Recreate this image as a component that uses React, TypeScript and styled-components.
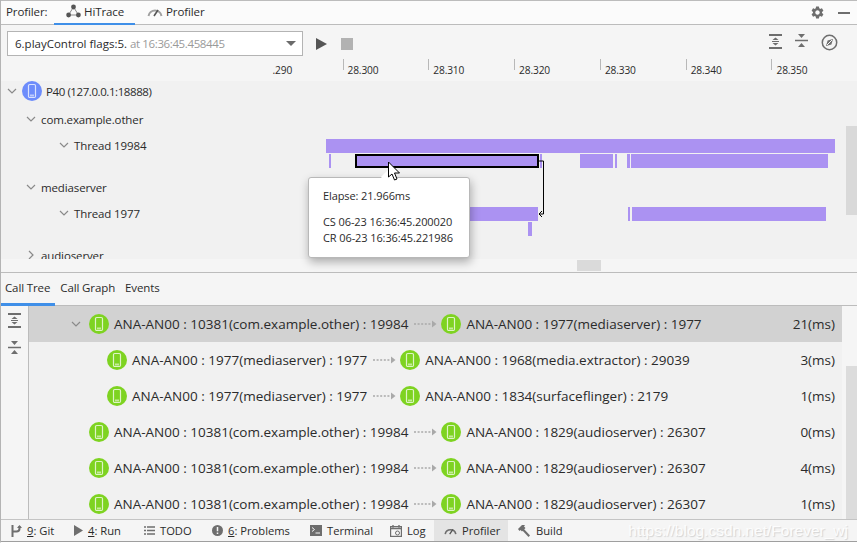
import React from "react";
import styled, { createGlobalStyle } from "styled-components";
import { MdSettings } from "react-icons/md";

const Global = createGlobalStyle`
  html, body { margin: 0; padding: 0; background: #fff; }
  * { box-sizing: border-box; }
`;

const Frame = styled.div`
  width: 857px;
  height: 543px;
  overflow: hidden;
  position: relative;
  display: flex;
  flex-direction: column;
  font-family: "Open Sans", "Noto Sans", sans-serif;
  color: #2b2b2b;
  background: #f5f5f5;
  border-left: 1px solid #b4b4b4;
  border-bottom: 1px solid #fff;
`;

const TopBar = styled.div`
  height: 25px;
  flex: none;
  display: flex;
  align-items: stretch;
  background: #fbfbfb;
  border-top: 1px solid #bcbcbc;
  border-bottom: 1px solid #bcbcbc;
  font-size: 11.5px;
  letter-spacing: -0.1px;
  padding-left: 5px;
`;

const TopLabel = styled.span`
  line-height: 22px;
  width: 48px;
`;

const TopTab = styled.div<{ $active?: boolean; $width: number }>`
  width: ${(p) => p.$width}px;
  display: flex;
  align-items: center;
  gap: 3px;
  padding: 0 0 2px 12px;
  border-bottom: 2px solid ${(p) => (p.$active ? "#3f8fe8" : "transparent")};
  margin-bottom: -1px;
`;

const TopActions = styled.div`
  margin-left: auto;
  display: flex;
  align-items: center;
  gap: 13px;
  padding-right: 7px;
  color: #6e6e6e;
`;

const Minimize = styled.span`
  width: 12px;
  height: 2px;
  background: #6e6e6e;
`;

const Controls = styled.div`
  height: 31px;
  flex: none;
  padding: 6px 19px 0 6px;
  display: flex;
  align-items: flex-start;
`;

const Combo = styled.div`
  width: 296px;
  height: 25px;
  background: #fff;
  border: 1px solid #b4b4b4;
  font-size: 11.5px;
  padding-left: 7px;
  display: flex;
  align-items: center;
  position: relative;
`;

const Muted = styled.span`
  color: #9a9a9a;
  margin-left: 3px;
  letter-spacing: -0.38px;
`;

const ComboArrow = styled.span`
  margin-left: auto;
  margin-right: 6px;
  border-left: 5px solid transparent;
  border-right: 5px solid transparent;
  border-top: 5px solid #6b6b6b;
`;

const PlayButton = styled.span`
  margin: 7px 0 0 13px;
  border-left: 11px solid #555;
  border-top: 6px solid transparent;
  border-bottom: 6px solid transparent;
`;

const StopButton = styled.span`
  margin: 7px 0 0 14px;
  width: 12px;
  height: 12px;
  background: #b2b2b2;
`;

const RightTools = styled.div`
  margin-left: auto;
  display: flex;
  gap: 13px;
  padding-top: 3px;
  color: #6e6e6e;
`;

const Ruler = styled.div`
  height: 25px;
  flex: none;
  display: flex;
  padding-left: 256.5px;
  overflow: hidden;
  font-size: 10.2px;
  letter-spacing: -0.15px;
`;

const RulerStub = styled.div`
  width: 85px;
  flex: none;
  padding: 7px 0 0 15px;
  line-height: 14px;
`;

const RulerCell = styled.div`
  width: 85.8px;
  flex: none;
  position: relative;
  padding: 7px 0 0 5px;
  line-height: 14px;
  &::before {
    content: "";
    position: absolute;
    left: 0;
    top: 3px;
    width: 1px;
    height: 11px;
    background: #b8b8b8;
  }
`;

const TraceArea = styled.div`
  position: relative;
  height: 192px;
  flex: none;
  border-bottom: 1px solid #bcbcbc;
`;

const TraceList = styled.div`
  height: 178px;
  overflow: hidden;
  background: #f1f1f1;
  font-size: 11.5px;
  letter-spacing: -0.12px;
`;

const TraceRow = styled.div<{ $indent: number; $gap: number }>`
  height: 20px;
  margin-top: ${(p) => p.$gap}px;
  padding-left: ${(p) => p.$indent}px;
  display: flex;
  align-items: center;
  gap: 5px;
`;

const DeviceName = styled.span`
  letter-spacing: -0.42px;
  margin-left: -1px;
`;

const TraceScroll = styled.div`
  height: 13px;
  padding-left: 576px;
`;

const ScrollThumbH = styled.div`
  width: 24px;
  height: 11px;
  margin-top: 1px;
  background: #dadada;
`;

const Bar = styled.div<{ $x: number; $y: number; $w: number; $selected?: boolean }>`
  position: absolute;
  left: ${(p) => p.$x - 1}px;
  top: ${(p) => p.$y - 81}px;
  width: ${(p) => p.$w}px;
  height: 14px;
  background: #ab92f2;
  border: ${(p) => (p.$selected ? "2px solid #000" : "none")};
`;

const ScrollThumbV = styled.div`
  position: absolute;
  left: 845px;
  top: 45px;
  width: 11px;
  height: 89px;
  background: #d9d9d9;
`;

const FlowLine = styled.svg`
  position: absolute;
  left: 536px;
  top: 78px;
`;

const Pointer = styled.svg`
  position: absolute;
  left: 386px;
  top: 80px;
  z-index: 3;
`;

const Tooltip = styled.div`
  position: absolute;
  left: 307px;
  top: 96px;
  width: 162px;
  height: 81px;
  background: #fff;
  border: 1px solid #b8b8b8;
  border-radius: 3px;
  box-shadow: 1px 4px 10px rgba(0, 0, 0, 0.3);
  padding: 10px 14px;
  font-size: 11px;
  line-height: 16px;
  white-space: nowrap;
  letter-spacing: -0.1px;
  z-index: 2;
  &::before {
    content: "";
    position: absolute;
    left: 74px;
    top: -6px;
    width: 10px;
    height: 10px;
    background: #fff;
    transform: rotate(45deg);
  }
`;

const TipGap = styled.div`
  height: 10px;
`;

const PanelTabs = styled.div`
  height: 33px;
  flex: none;
  display: flex;
  font-size: 11.5px;
  letter-spacing: -0.12px;
  border-bottom: 1px solid #bcbcbc;
`;

const PanelTab = styled.div<{ $active?: boolean }>`
  padding: 7px 5px 0 4px;
  margin-right: 1px;
  line-height: 16px;
  margin-bottom: -1px;
  border-bottom: 3px solid ${(p) => (p.$active ? "#3f8fe8" : "transparent")};
`;

const CallPanel = styled.div`
  flex: 1;
  min-height: 0;
  display: flex;
`;

const Gutter = styled.div`
  width: 28px;
  flex: none;
  border-right: 1px solid #bcbcbc;
  display: flex;
  flex-direction: column;
  align-items: center;
  gap: 13px;
  padding: 7px 1px 0 0;
  color: #6e6e6e;
`;

const CallList = styled.div`
  flex: 1;
  min-width: 0;
  overflow: hidden;
  background: #f1f1f1;
  font-size: 13.5px;
`;

const CallRow = styled.div<{ $indent: number; $selected?: boolean }>`
  height: 36px;
  display: flex;
  align-items: center;
  padding: 0 7px 0 ${(p) => p.$indent}px;
  background: ${(p) => (p.$selected ? "#d2d2d2" : "transparent")};
  white-space: nowrap;
`;

const CallName = styled.span`
  margin-left: 5px;
`;

const Chevron = styled.svg`
  flex: none;
  color: #8a8a8a;
`;

const ChevronGap = styled.span`
  width: 8px;
`;

const Badge = styled.svg`
  flex: none;
`;

const Arrow = styled.svg`
  flex: none;
  margin: 0 3px 0 6px;
`;

const Duration = styled.span`
  margin-left: auto;
`;

const CallScroll = styled.div`
  width: 15px;
  flex: none;
  padding: 60px 0 0 4px;
  display: flex;
`;

const ScrollThumbCall = styled.div`
  flex: 1;
  background: #dcdcdc;
`;

const StatusBar = styled.div`
  height: 23px;
  flex: none;
  display: flex;
  align-items: stretch;
  border-top: 1px solid #c4c4c4;
  border-bottom: 1px solid #9f9f9f;
  font-size: 11.2px;
  padding-left: 10px;
  background: #f5f5f5;
`;

const StatusItem = styled.div<{ $width: number; $pad?: number; $active?: boolean }>`
  width: ${(p) => p.$width}px;
  display: flex;
  align-items: center;
  gap: 5px;
  padding-left: ${(p) => p.$pad ?? 0}px;
  background: ${(p) => (p.$active ? "#e4e4e4" : "transparent")};
  color: #2b2b2b;
  svg {
    flex: none;
    color: #6e6e6e;
  }
`;

const Watermark = styled.div`
  position: absolute;
  right: 9px;
  bottom: 2px;
  font-family: "Liberation Sans", sans-serif;
  font-size: 15.5px;
  color: rgba(255, 255, 255, 0.9);
  text-shadow: 1px 1px 1px rgba(140, 140, 140, 0.32);
`;

const PhoneBadge = ({ color }: { color: string }) => (
  <Badge width="20" height="20" viewBox="0 0 20 20">
    <circle cx="10" cy="10" r="10" fill={color} />
    <rect x="6.5" y="3.5" width="7" height="13" rx="1.2" fill="none" stroke="#fff" strokeOpacity="0.75" strokeWidth="1.2" />
    <rect x="8" y="13.5" width="4" height="2" fill="#fff" fillOpacity="0.55" />
  </Badge>
);

const Down = () => (
  <Chevron width="10" height="10" viewBox="0 0 10 10">
    <path d="M1 3l4 4 4-4" fill="none" stroke="currentColor" strokeWidth="1.2" />
  </Chevron>
);

const Right = () => (
  <Chevron width="10" height="10" viewBox="0 0 10 10">
    <path d="M3 1l4 4-4 4" fill="none" stroke="currentColor" strokeWidth="1.2" />
  </Chevron>
);

const FlowArrow = () => (
  <Arrow width="24" height="10" viewBox="0 0 24 10">
    <path d="M0 5h18" stroke="#a9a9a9" strokeWidth="1.5" strokeDasharray="2 1.6" />
    <path d="M18 1.5l4.5 3.5-4.5 3.5z" fill="#a9a9a9" />
  </Arrow>
);

const ExpandIcon = () => (
  <svg width="13" height="15" viewBox="0 0 13 15">
    <path d="M0 1h13M0 14h13" stroke="currentColor" strokeWidth="2" />
    <path d="M6.5 3.5l3 2.5h-6zM6.5 11.5l3-2.5h-6z" fill="currentColor" />
    <path d="M3 7.5h7" stroke="currentColor" />
  </svg>
);

const CollapseIcon = () => (
  <svg width="13" height="13" viewBox="0 0 13 13">
    <path d="M0 6.5h13" stroke="currentColor" strokeWidth="1.5" />
    <path d="M3 0h7L6.5 4zM3 13h7L6.5 9z" fill="currentColor" />
  </svg>
);

const LocateIcon = () => (
  <svg width="17" height="17" viewBox="0 0 17 17">
    <circle cx="8.5" cy="8.5" r="7.2" fill="none" stroke="currentColor" strokeWidth="1.5" />
    <path d="M5 12l1.6-5.4L12 5l-1.6 5.4z" fill="currentColor" />
    <path d="M6 11l5-5" stroke="#f5f5f5" />
  </svg>
);

const HiTraceIcon = () => (
  <svg width="15" height="14" viewBox="0 0 15 14">
    <path d="M7.5 3L2.5 11h10z" fill="none" stroke="#8a8a8a" strokeWidth="1" />
    <circle cx="7.5" cy="3" r="2.4" fill="#555" />
    <circle cx="2.6" cy="11" r="2.4" fill="#555" />
    <circle cx="12.4" cy="11" r="2.4" fill="#555" />
  </svg>
);

const GaugeIcon = ({ color = "#a0a0a0", width = 16 }: { color?: string; width?: number }) => (
  <svg width={width} height="11" viewBox="0 0 16 11">
    <path d="M1.5 10a6.6 6.6 0 0 1 13 0" fill="none" stroke={color} strokeWidth="2" />
    <path d="M7 10l4-6" stroke="#555" strokeWidth="1.6" />
  </svg>
);

const GitIcon = () => (
  <svg width="11" height="12" viewBox="0 0 11 12">
    <path d="M1.5 0v12M1.5 6.5h4a3 3 0 0 0 3-3V1" fill="none" stroke="currentColor" strokeWidth="2" />
    <path d="M8.5 0l2.5 3H6z" fill="currentColor" />
  </svg>
);

const RunIcon = () => (
  <svg width="9" height="11" viewBox="0 0 9 11">
    <path d="M0 0l9 5.5L0 11z" fill="currentColor" />
  </svg>
);

const TodoIcon = () => (
  <svg width="11" height="9" viewBox="0 0 11 9">
    <path d="M0 1h2M3 1h8M0 4.5h2M3 4.5h8M0 8h2M3 8h8" stroke="currentColor" strokeWidth="1.4" />
  </svg>
);

const ProblemIcon = () => (
  <svg width="11" height="11" viewBox="0 0 11 11">
    <circle cx="5.5" cy="5.5" r="5.5" fill="currentColor" />
    <path d="M5.5 2v4.2M5.5 7.5v1.4" stroke="#f5f5f5" strokeWidth="1.5" />
  </svg>
);

const TerminalIcon = () => (
  <svg width="12" height="11" viewBox="0 0 12 11">
    <rect width="12" height="11" fill="currentColor" />
    <path d="M2 2.5l2.5 2L2 6.5M5.5 8H10" fill="none" stroke="#f5f5f5" />
  </svg>
);

const LogIcon = () => (
  <svg width="12" height="12" viewBox="0 0 12 12">
    <rect x="0.6" y="1.6" width="10.8" height="9.8" fill="none" stroke="currentColor" strokeWidth="1.2" />
    <path d="M0 3.5h12M3 0v2.5M9 0v2.5" stroke="currentColor" strokeWidth="1.4" />
    <circle cx="7.5" cy="8" r="2" fill="none" stroke="currentColor" />
  </svg>
);

const HammerIcon = () => (
  <svg width="13" height="12" viewBox="0 0 13 12">
    <path d="M5 3l7 7.5-1.5 1.5L3.5 4.5z" fill="currentColor" />
    <path d="M0 4l4-4h3l-1 1.5L7.5 3 4 6.5 2.5 5 1.5 6z" fill="currentColor" />
  </svg>
);

const calls = [
  { indent: 42, chevron: true, selected: true, from: "ANA-AN00 : 10381(com.example.other) : 19984", to: "ANA-AN00 : 1977(mediaserver) : 1977", ms: "21(ms)" },
  { indent: 78, from: "ANA-AN00 : 1977(mediaserver) : 1977", to: "ANA-AN00 : 1968(media.extractor) : 29039", ms: "3(ms)" },
  { indent: 78, from: "ANA-AN00 : 1977(mediaserver) : 1977", to: "ANA-AN00 : 1834(surfaceflinger) : 2179", ms: "1(ms)" },
  { indent: 60, from: "ANA-AN00 : 10381(com.example.other) : 19984", to: "ANA-AN00 : 1829(audioserver) : 26307", ms: "0(ms)" },
  { indent: 60, from: "ANA-AN00 : 10381(com.example.other) : 19984", to: "ANA-AN00 : 1829(audioserver) : 26307", ms: "4(ms)" },
  { indent: 60, from: "ANA-AN00 : 10381(com.example.other) : 19984", to: "ANA-AN00 : 1829(audioserver) : 26307", ms: "1(ms)" },
];

const bars = [
  { x: 326, y: 139, w: 509 },
  { x: 329, y: 154, w: 2 },
  { x: 540, y: 154, w: 2 },
  { x: 580, y: 154, w: 33 },
  { x: 615, y: 154, w: 2 },
  { x: 627, y: 154, w: 3 },
  { x: 631, y: 154, w: 197 },
  { x: 400, y: 207, w: 138 },
  { x: 628, y: 207, w: 2 },
  { x: 632, y: 207, w: 194 },
  { x: 528, y: 222, w: 4 },
];

export default function App() {
  return (
    <Frame>
      <Global />
      <TopBar>
        <TopLabel>Profiler:</TopLabel>
        <TopTab $active $width={81}>
          <HiTraceIcon />
          HiTrace
        </TopTab>
        <TopTab $width={90}>
          <GaugeIcon />
          Profiler
        </TopTab>
        <TopActions>
          <MdSettings size={15} />
          <Minimize />
        </TopActions>
      </TopBar>

      <Controls>
        <Combo>
          6.playControl flags:5.<Muted>at 16:36:45.458445</Muted>
          <ComboArrow />
        </Combo>
        <PlayButton />
        <StopButton />
        <RightTools>
          <ExpandIcon />
          <CollapseIcon />
          <LocateIcon />
        </RightTools>
      </Controls>

      <Ruler>
        <RulerStub>.290</RulerStub>
        {["28.300", "28.310", "28.320", "28.330", "28.340", "28.350"].map((t) => (
          <RulerCell key={t}>{t}</RulerCell>
        ))}
      </Ruler>

      <TraceArea>
        <TraceList>
          <TraceRow $indent={6} $gap={0}>
            <Down />
            <PhoneBadge color="#6d8cfb" />
            <DeviceName>P40 (127.0.0.1:18888)</DeviceName>
          </TraceRow>
          <TraceRow $indent={25} $gap={8}>
            <Down />
            <span>com.example.other</span>
          </TraceRow>
          <TraceRow $indent={58} $gap={6}>
            <Down />
            <span>Thread 19984</span>
          </TraceRow>
          <TraceRow $indent={25} $gap={22}>
            <Down />
            <span>mediaserver</span>
          </TraceRow>
          <TraceRow $indent={58} $gap={6}>
            <Down />
            <span>Thread 1977</span>
          </TraceRow>
          <TraceRow $indent={25} $gap={22}>
            <Right />
            <span>audioserver</span>
          </TraceRow>
        </TraceList>
        <TraceScroll>
          <ScrollThumbH />
        </TraceScroll>

        {bars.map((b) => (
          <Bar key={`${b.x}-${b.y}`} $x={b.x} $y={b.y} $w={b.w} />
        ))}
        <Bar $x={355} $y={154} $w={184} $selected />
        <FlowLine width="12" height="60" viewBox="0 0 12 60">
          <path d="M2 2h4.5v53H2" fill="none" stroke="#000" />
          <path d="M5 52l-3 3 3 3" fill="none" stroke="#000" />
        </FlowLine>
        <ScrollThumbV />
        <Tooltip>
          <div>Elapse: 21.966ms</div>
          <TipGap />
          <div>CS 06-23 16:36:45.200020</div>
          <div>CR 06-23 16:36:45.221986</div>
        </Tooltip>
        <Pointer width="14" height="21" viewBox="0 0 14 21">
          <path d="M1.5 1v15l3.5-3 2.5 6 2.5-1-2.5-6h5z" fill="#fff" stroke="#000" />
        </Pointer>
      </TraceArea>

      <PanelTabs>
        <PanelTab $active>Call Tree</PanelTab>
        <PanelTab>Call Graph</PanelTab>
        <PanelTab>Events</PanelTab>
      </PanelTabs>

      <CallPanel>
        <Gutter>
          <ExpandIcon />
          <CollapseIcon />
        </Gutter>
        <CallList>
          {calls.map((c, i) => (
            <CallRow key={i} $indent={c.indent} $selected={c.selected}>
              {c.chevron && <Down />}
              {c.chevron && <ChevronGap />}
              <PhoneBadge color="#7ed321" />
              <CallName>{c.from}</CallName>
              <FlowArrow />
              <PhoneBadge color="#7ed321" />
              <CallName>{c.to}</CallName>
              <Duration>{c.ms}</Duration>
            </CallRow>
          ))}
        </CallList>
        <CallScroll>
          <ScrollThumbCall />
        </CallScroll>
      </CallPanel>

      <StatusBar>
        <StatusItem $width={63}><GitIcon /><span><u>9</u>: Git</span></StatusItem>
        <StatusItem $width={70}><RunIcon /><span><u>4</u>: Run</span></StatusItem>
        <StatusItem $width={68}><TodoIcon />TODO</StatusItem>
        <StatusItem $width={98}><ProblemIcon /><span><u>6</u>: Problems</span></StatusItem>
        <StatusItem $width={80}><TerminalIcon />Terminal</StatusItem>
        <StatusItem $width={44}><LogIcon />Log</StatusItem>
        <StatusItem $width={74} $pad={10} $active><GaugeIcon color="#6e6e6e" width={13} />Profiler</StatusItem>
        <StatusItem $width={60} $pad={10}><HammerIcon />Build</StatusItem>
      </StatusBar>
      <Watermark>https://blog.csdn.net/Forever_wj</Watermark>
    </Frame>
  );
}
